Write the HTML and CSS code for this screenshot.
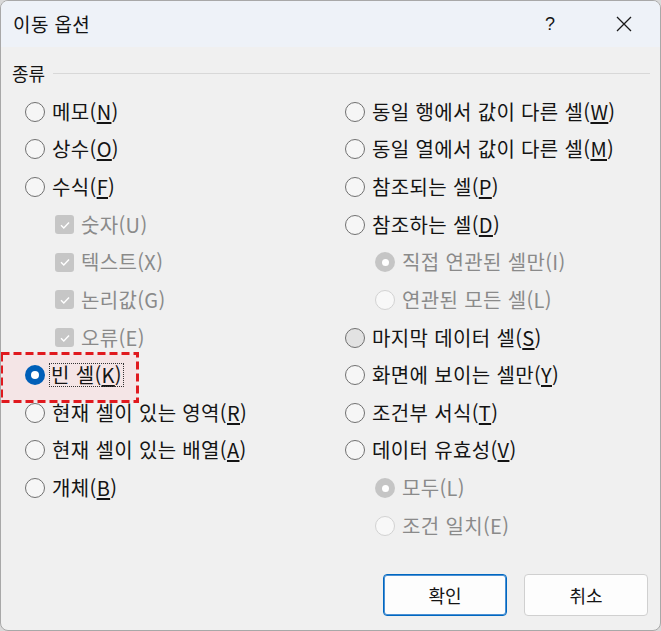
FILE: index.html
```html
<!DOCTYPE html>
<html lang="ko">
<head>
<meta charset="utf-8">
<title>이동 옵션</title>
<link rel="stylesheet" href="styles.css">
</head>
<body>
<div class="dialog">
  <div class="titlebar">
    <span class="title">이동 옵션</span>
    <span class="help">?</span>
    <span class="close">
      <svg width="16" height="16" viewBox="0 0 16 16"><path d="M1 1L15 15M15 1L1 15" stroke="#1a1a1a" stroke-width="1.3" fill="none"/></svg>
    </span>
  </div>
  <div class="content">
    <div class="group-head"><span class="group-label">종류</span><div class="rule"></div></div>
    <div class="columns">
      <div class="col">
        <div class="row"><span class="radio"></span><span class="label">메모(<u>N</u>)</span></div>
        <div class="row"><span class="radio"></span><span class="label">상수(<u>O</u>)</span></div>
        <div class="row"><span class="radio"></span><span class="label">수식(<u>F</u>)</span></div>
        <div class="row sub disabled"><span class="check"><svg width="12" height="10" viewBox="0 0 12 10"><path d="M2 5.2L4.8 8L10 2.5" stroke="#fff" stroke-width="1.4" fill="none"/></svg></span><span class="label">숫자(U)</span></div>
        <div class="row sub disabled"><span class="check"><svg width="12" height="10" viewBox="0 0 12 10"><path d="M2 5.2L4.8 8L10 2.5" stroke="#fff" stroke-width="1.4" fill="none"/></svg></span><span class="label">텍스트(X)</span></div>
        <div class="row sub disabled"><span class="check"><svg width="12" height="10" viewBox="0 0 12 10"><path d="M2 5.2L4.8 8L10 2.5" stroke="#fff" stroke-width="1.4" fill="none"/></svg></span><span class="label">논리값(G)</span></div>
        <div class="row sub disabled"><span class="check"><svg width="12" height="10" viewBox="0 0 12 10"><path d="M2 5.2L4.8 8L10 2.5" stroke="#fff" stroke-width="1.4" fill="none"/></svg></span><span class="label">오류(E)</span></div>
        <div class="row selected">
          <span class="highlight"><svg width="139" height="51" viewBox="0 0 139 51"><rect x="1.5" y="1.5" width="136" height="48" fill="#f4e5e6" stroke="#e0191e" stroke-width="3" stroke-dasharray="8 4"/></svg></span>
          <span class="radio on"></span><span class="label focus">빈 셀(<u>K</u>)</span>
        </div>
        <div class="row"><span class="radio"></span><span class="label">현재 셀이 있는 영역(<u>R</u>)</span></div>
        <div class="row"><span class="radio"></span><span class="label">현재 셀이 있는 배열(<u>A</u>)</span></div>
        <div class="row"><span class="radio"></span><span class="label">개체(<u>B</u>)</span></div>
      </div>
      <div class="col">
        <div class="row"><span class="radio"></span><span class="label">동일 행에서 값이 다른 셀(<u>W</u>)</span></div>
        <div class="row"><span class="radio"></span><span class="label">동일 열에서 값이 다른 셀(<u>M</u>)</span></div>
        <div class="row"><span class="radio"></span><span class="label">참조되는 셀(<u>P</u>)</span></div>
        <div class="row"><span class="radio"></span><span class="label">참조하는 셀(<u>D</u>)</span></div>
        <div class="row sub disabled"><span class="radio dis-on"></span><span class="label">직접 연관된 셀만(I)</span></div>
        <div class="row sub disabled"><span class="radio dis"></span><span class="label">연관된 모든 셀(L)</span></div>
        <div class="row"><span class="radio hover"></span><span class="label">마지막 데이터 셀(<u>S</u>)</span></div>
        <div class="row"><span class="radio"></span><span class="label">화면에 보이는 셀만(<u>Y</u>)</span></div>
        <div class="row"><span class="radio"></span><span class="label">조건부 서식(<u>T</u>)</span></div>
        <div class="row"><span class="radio"></span><span class="label">데이터 유효성(<u>V</u>)</span></div>
        <div class="row sub disabled"><span class="radio dis-on"></span><span class="label">모두(L)</span></div>
        <div class="row sub disabled"><span class="radio dis"></span><span class="label">조건 일치(E)</span></div>
      </div>
    </div>
    <div class="buttons">
      <button class="btn primary">확인</button>
      <button class="btn">취소</button>
    </div>
  </div>
</div>
</body>
</html>
```
FILE: styles.css
```css
html, body {
  margin: 0;
  padding: 0;
  background: #d9d9d9;
}
body {
  width: 661px;
  height: 631px;
  overflow: hidden;
  font-family: "Noto Sans CJK KR", "Noto Sans", sans-serif;
  color: #141414;
}
.dialog {
  box-sizing: border-box;
  width: 661px;
  height: 631px;
  border: 1px solid #a8a8a8;
  border-radius: 8px;
  background: #f0f0f0;
  overflow: hidden;
}
.titlebar {
  height: 46px;
  background: #eef2f8;
  display: flex;
  align-items: center;
  padding-left: 12px;
  padding-right: 28px;
}
.title {
  font-size: 19px;
  flex: 1;
  line-height: 22px;
  letter-spacing: 0.4px;
}
.help {
  font-size: 18px;
  font-family: "Liberation Sans", sans-serif;
  margin-right: 61px;
  line-height: 20px;
}
.close {
  display: flex;
  align-items: center;
}
.content {
  padding: 15px 0 0 0;
}
.group-head {
  display: flex;
  align-items: center;
  height: 22px;
  padding-left: 11px;
  padding-right: 10px;
}
.group-label {
  font-size: 18px;
  line-height: 22px;
}
.rule {
  flex: 1;
  height: 1px;
  background: #d8d8d8;
  margin-left: 8px;
}
.columns {
  display: grid;
  grid-template-columns: 320px 1fr;
  padding-left: 24px;
  margin-top: 9px;
}
.row {
  position: relative;
  height: 37.64px;
  display: flex;
  align-items: center;
}
.row.sub {
  padding-left: 30px;
}
.label {
  font-size: 20px;
  line-height: 22px;
  margin-left: 7px;
  white-space: nowrap;
  position: relative;
  letter-spacing: 0.35px;
}
.label u {
  text-underline-offset: 2px;
}
.disabled .label {
  color: #8a8a8a;
}
.radio {
  box-sizing: border-box;
  width: 20px;
  height: 20px;
  border-radius: 50%;
  border: 1.3px solid #707070;
  background: #f6f6f6;
  flex: none;
  position: relative;
}
.radio.hover {
  background: #e2e2e2;
}
.radio.on {
  border: none;
  background: #005fb8;
}
.radio.on::after {
  content: "";
  position: absolute;
  left: 6px;
  top: 6px;
  width: 8px;
  height: 8px;
  border-radius: 50%;
  background: #fff;
}
.radio.dis-on {
  border: none;
  background: #c5c5c5;
}
.radio.dis-on::after {
  content: "";
  position: absolute;
  left: 6.5px;
  top: 6.5px;
  width: 7px;
  height: 7px;
  border-radius: 50%;
  background: #fff;
}
.radio.dis {
  border-color: #d2d2d2;
  background: #f8f8f8;
}
.check {
  box-sizing: border-box;
  width: 19px;
  height: 19px;
  border-radius: 3px;
  background: #c6c6c6;
  display: flex;
  align-items: center;
  justify-content: center;
  flex: none;
}
.label.focus {
  outline: 1px dotted #333;
  outline-offset: 0;
  padding: 0 1px;
  margin-left: 5px;
}
.highlight {
  position: absolute;
  left: -25px;
  top: -4px;
  width: 139px;
  height: 51px;
}
.highlight svg {
  display: block;
}
.buttons {
  display: flex;
  justify-content: flex-end;
  gap: 17px;
  padding-right: 12px;
  margin-top: 29px;
}
.btn {
  box-sizing: border-box;
  width: 124px;
  height: 42px;
  border-radius: 4px;
  border: 1px solid #d0d0d0;
  background: #fdfdfd;
  font-family: "Noto Sans CJK KR", sans-serif;
  font-size: 18px;
  color: #141414;
}
.btn.primary {
  border-color: #0067c0;
  box-shadow: inset 0 0 0 1px #4a90d4;
}
```
